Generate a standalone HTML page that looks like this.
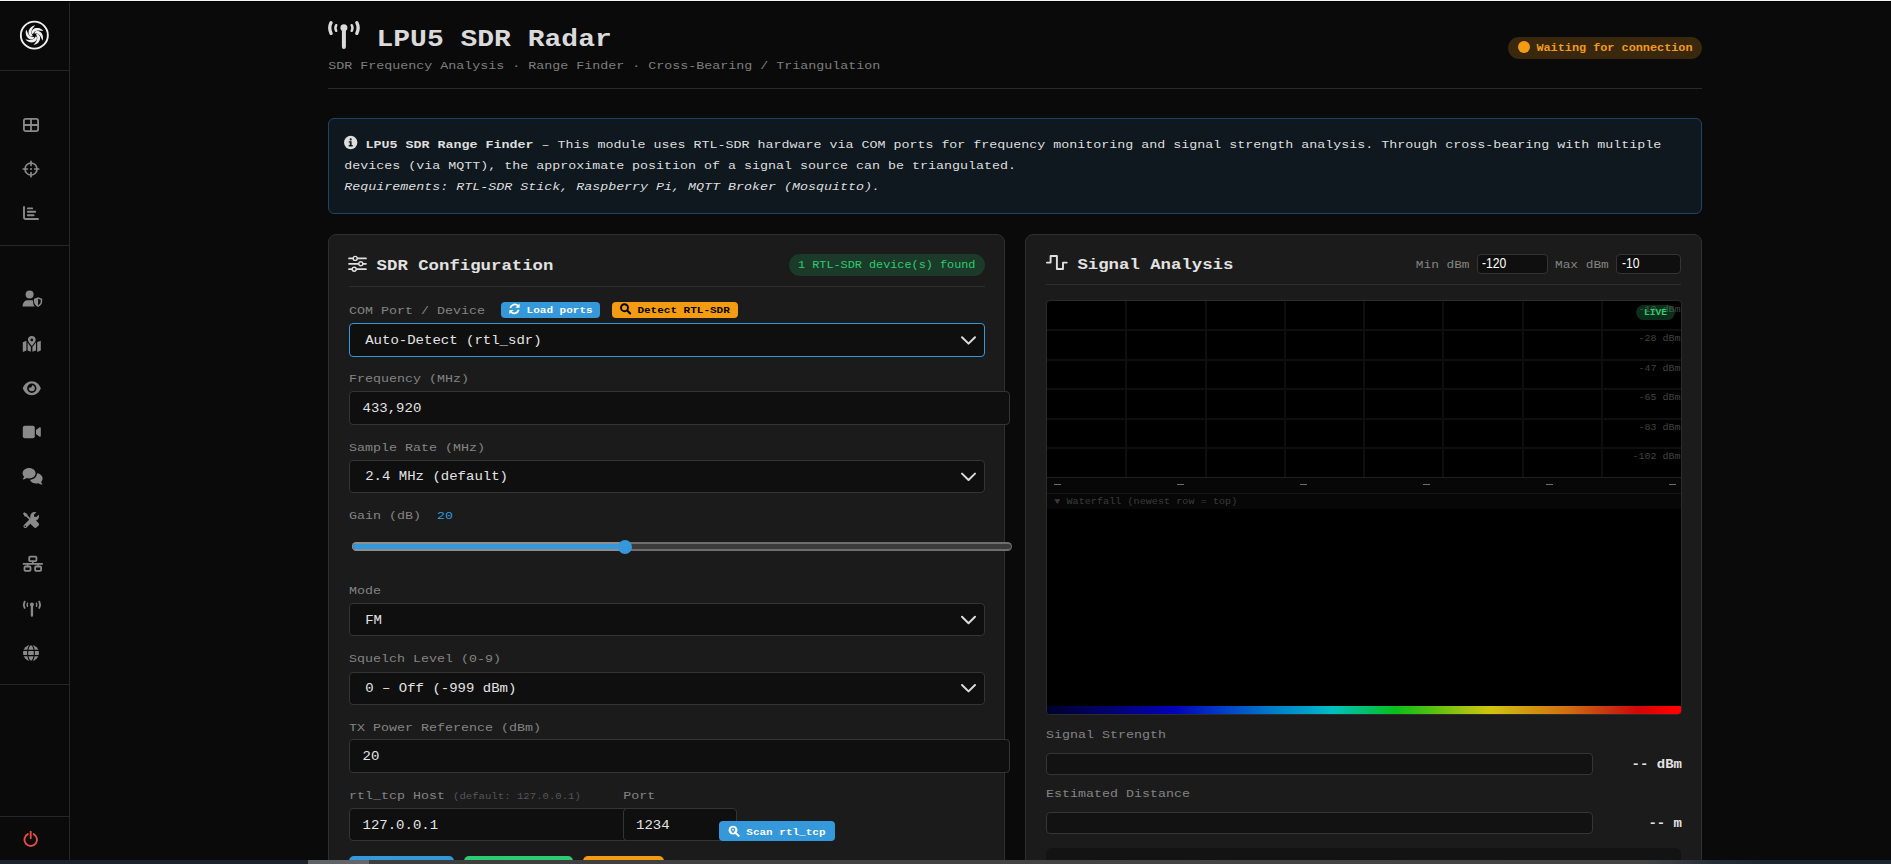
<!DOCTYPE html>
<html lang="en">
<head>
<meta charset="utf-8">
<title>LPU5 SDR Radar</title>
<style>
*{box-sizing:border-box;margin:0;padding:0}
html,body{width:1891px;height:864px;overflow:hidden;background:#0a0a0a}
body{position:relative;font-family:"Liberation Mono","DejaVu Sans Mono",monospace;color:#e0e0e0}
.abs{position:absolute}
.t{position:absolute;white-space:pre;line-height:20px;height:20px}
.ctl{position:absolute;background:#0f0f0f;border:1px solid #343434;border-radius:4px}
.card{position:absolute;background:#1b1b1b;border:1px solid #2f2f2f;border-radius:8px}
.hr{position:absolute;height:1px}
svg{position:absolute;overflow:visible}
</style>
</head>
<body>
<div class="abs" style="left:0px;top:0px;width:1891px;height:1px;background:#f7f8f6;"></div>
<div class="abs" style="left:0px;top:1px;width:1891px;height:1px;background:#000;"></div>
<!-- sidebar -->
<div class="abs" style="left:69px;top:2px;width:1px;height:858px;background:#262626;"></div>
<div class="abs" style="left:0px;top:70px;width:69px;height:1px;background:#262626;"></div>
<div class="abs" style="left:0px;top:245px;width:69px;height:1px;background:#262626;"></div>
<div class="abs" style="left:0px;top:684px;width:69px;height:1px;background:#262626;"></div>
<div class="abs" style="left:0px;top:816px;width:69px;height:1px;background:#262626;"></div>
<svg style="left:18px;top:19px" width="33" height="33" viewBox="-16 -16 33 33" fill="#f0f0f0" ><g transform="translate(0.350 0.150)"><circle cx="0" cy="0" r="13.5" fill="none" stroke="#f0f0f0" stroke-width="1.9"/><g fill="#f0f0f0"><path d="M0.00 -2.00 L0.49 -3.14 L1.21 -3.76 L2.08 -4.11 L3.04 -4.23 L4.05 -4.10 L5.06 -3.74 L6.03 -3.14 L6.90 -2.32 L7.64 -1.30 L8.20 -0.10 L8.55 1.23 L8.67 2.67 L8.52 4.17 L8.11 5.68 L8.11 5.68 L7.25 3.55 L6.64 2.05 L5.94 0.86 L5.18 -0.06 L4.40 -0.75 L3.63 -1.22 L2.92 -1.52 L2.29 -1.69 L1.74 -1.76 L1.28 -1.77 L0.89 -1.76 L0.56 -1.74 L0.27 -1.74 L0.00 -2.00Z"/><path d="M1.73 -1.00 L2.97 -1.14 L3.86 -0.83 L4.60 -0.26 L5.18 0.52 L5.58 1.46 L5.77 2.52 L5.73 3.65 L5.46 4.82 L4.94 5.97 L4.19 7.05 L3.21 8.02 L2.02 8.84 L0.65 9.47 L-0.86 9.86 L-0.86 9.86 L0.55 8.05 L1.55 6.78 L2.23 5.58 L2.65 4.45 L2.85 3.43 L2.87 2.54 L2.78 1.77 L2.61 1.14 L2.40 0.63 L2.18 0.22 L1.97 -0.11 L1.78 -0.38 L1.64 -0.63 L1.73 -1.00Z"/><path d="M1.73 1.00 L2.47 2.00 L2.65 2.93 L2.52 3.85 L2.14 4.74 L1.53 5.56 L0.70 6.25 L-0.30 6.79 L-1.44 7.14 L-2.70 7.26 L-4.01 7.15 L-5.35 6.79 L-6.65 6.17 L-7.87 5.30 L-8.97 4.18 L-8.97 4.18 L-6.70 4.50 L-5.09 4.73 L-3.71 4.72 L-2.53 4.52 L-1.55 4.18 L-0.76 3.76 L-0.14 3.29 L0.32 2.83 L0.66 2.39 L0.90 1.99 L1.08 1.65 L1.22 1.35 L1.37 1.11 L1.73 1.00Z"/><path d="M0.00 2.00 L-0.49 3.14 L-1.21 3.76 L-2.08 4.11 L-3.04 4.23 L-4.05 4.10 L-5.06 3.74 L-6.03 3.14 L-6.90 2.32 L-7.64 1.30 L-8.20 0.10 L-8.55 -1.23 L-8.67 -2.67 L-8.52 -4.17 L-8.11 -5.68 L-8.11 -5.68 L-7.25 -3.55 L-6.64 -2.05 L-5.94 -0.86 L-5.18 0.06 L-4.40 0.75 L-3.63 1.22 L-2.92 1.52 L-2.29 1.69 L-1.74 1.76 L-1.28 1.77 L-0.89 1.76 L-0.56 1.74 L-0.27 1.74 L0.00 2.00Z"/><path d="M-1.73 1.00 L-2.97 1.14 L-3.86 0.83 L-4.60 0.26 L-5.18 -0.52 L-5.58 -1.46 L-5.77 -2.52 L-5.73 -3.65 L-5.46 -4.82 L-4.94 -5.97 L-4.19 -7.05 L-3.21 -8.02 L-2.02 -8.84 L-0.65 -9.47 L0.86 -9.86 L0.86 -9.86 L-0.55 -8.05 L-1.55 -6.78 L-2.23 -5.58 L-2.65 -4.45 L-2.85 -3.43 L-2.87 -2.54 L-2.78 -1.77 L-2.61 -1.14 L-2.40 -0.63 L-2.18 -0.22 L-1.97 0.11 L-1.78 0.38 L-1.64 0.63 L-1.73 1.00Z"/><path d="M-1.73 -1.00 L-2.47 -2.00 L-2.65 -2.93 L-2.52 -3.85 L-2.14 -4.74 L-1.53 -5.56 L-0.70 -6.25 L0.30 -6.79 L1.44 -7.14 L2.70 -7.26 L4.01 -7.15 L5.35 -6.79 L6.65 -6.17 L7.87 -5.30 L8.97 -4.18 L8.97 -4.18 L6.70 -4.50 L5.09 -4.73 L3.71 -4.72 L2.53 -4.52 L1.55 -4.18 L0.76 -3.76 L0.14 -3.29 L-0.32 -2.83 L-0.66 -2.39 L-0.90 -1.99 L-1.08 -1.65 L-1.22 -1.35 L-1.37 -1.11 L-1.73 -1.00Z"/></g></g></svg>
<svg style="left:23px;top:118px" width="17" height="15" viewBox="0 0 17 15" fill="#8a8a8a" ><g transform="translate(0.000 0.000)"><rect x="0.9" y="0.9" width="14.2" height="12.2" rx="1.8" fill="none" stroke="#8a8a8a" stroke-width="1.8"/><path d="M8 1V13M1 7H15" stroke="#8a8a8a" stroke-width="1.8" fill="none"/></g></svg>
<svg style="left:23px;top:161px" width="17" height="17" viewBox="0 0 17 17" fill="#8a8a8a" ><g transform="translate(0.000 0.000)"><circle cx="8" cy="8" r="6.0" fill="none" stroke="#8a8a8a" stroke-width="1.7"/><path d="M8 0.3V4.4M8 11.6V15.7M0.3 8H4.4M11.6 8H15.7" stroke="#8a8a8a" stroke-width="1.7" fill="none" stroke-linecap="round"/><circle cx="8" cy="8" r="1.1" fill="#8a8a8a"/></g></svg>
<svg style="left:23px;top:206px" width="17" height="15" viewBox="0 0 17 15" fill="#8a8a8a" ><g transform="translate(0.000 0.000)"><path d="M1 1V11.2Q1 13 2.8 13H15" stroke="#8a8a8a" stroke-width="1.9" fill="none" stroke-linecap="round"/><path d="M4.8 2.4H9.2M4.8 5.8H12.2M4.8 9.2H10.6" stroke="#8a8a8a" stroke-width="1.9" fill="none" stroke-linecap="round"/></g></svg>
<svg style="left:22px;top:290px" width="21" height="18" viewBox="0 0 21 18" fill="#8a8a8a" ><g transform="translate(0.600 0.600)"><circle cx="7" cy="4" r="4" fill="#8a8a8a"/><path d="M0 16 C0 11.5 2.5 9.6 5.4 9.6 H8.6 C9.4 9.6 10 9.7 10.6 9.9 V12 C10.6 13.8 11.3 15.1 12.2 16 Z" fill="#8a8a8a"/><path d="M15.5 6.6 L19.6 8.2 V11 C19.6 13.6 17.8 15.5 15.5 16.4 C13.2 15.5 11.4 13.6 11.4 11 V8.2 Z M15.5 8.2 V14.8 C17 14 18.1 12.7 18.1 11 V9.2 Z" fill="#8a8a8a" fill-rule="evenodd"/></g></svg>
<svg style="left:22px;top:336px" width="19" height="17" viewBox="0 0 19 17" fill="#8a8a8a" ><g transform="translate(0.800 0.000)"><path d="M0 6.2 L3.6 4.8 V14.6 L0 16 Z M14.6 6.1 L18 4.8 V14.4 L14.4 15.9 V6.4 Z M4.8 6.2 C5.4 7.6 6.8 9.4 8 10.8 V15.8 L4.8 14.6 Z M9.6 15.8 V10.8 C10.8 9.4 12.4 7.6 13.2 6.2 V14.5 Z" fill="#8a8a8a"/><path d="M9 0 C11.2 0 12.9 1.7 12.9 3.8 C12.9 5.6 10.6 8.3 9.5 9.6 C9.2 9.9 8.8 9.9 8.5 9.6 C7.4 8.3 5.1 5.6 5.1 3.8 C5.1 1.7 6.8 0 9 0 Z M9 2.5 A1.4 1.4 0 1 0 9 5.3 A1.4 1.4 0 1 0 9 2.5 Z" fill="#8a8a8a" fill-rule="evenodd"/></g></svg>
<svg style="left:22px;top:381px" width="19" height="15" viewBox="0 0 19 15" fill="#8a8a8a" ><g transform="translate(0.800 0.200)"><path d="M9 0 C13.4 0 16.6 3 18 7 C16.6 11 13.4 14 9 14 C4.6 14 1.4 11 0 7 C1.4 3 4.6 0 9 0 Z M9 2.3 A4.7 4.7 0 1 0 9 11.7 A4.7 4.7 0 1 0 9 2.3 Z" fill="#8a8a8a" fill-rule="evenodd"/><path d="M9 4 A3 3 0 1 1 6 7 C6 6.7 6 6.5 6.1 6.2 C6.4 6.4 6.8 6.5 7.2 6.5 A2 2 0 0 0 9.2 4.5 C9.2 4.3 9.1 4.2 9 4 Z" fill="#8a8a8a"/></g></svg>
<svg style="left:22px;top:425px" width="19" height="13.6" viewBox="0 0 19 13.6" fill="#8a8a8a" ><g transform="translate(0.800 0.700)"><rect x="0" y="0" width="12" height="12.6" rx="2" fill="#8a8a8a"/><path d="M13.2 4.2 L16.8 1.6 C17.3 1.3 18 1.6 18 2.3 V10.3 C18 11 17.3 11.3 16.8 11 L13.2 8.4 Z" fill="#8a8a8a"/></g></svg>
<svg style="left:22px;top:468px" width="21" height="17.6" viewBox="0 0 21 17.6" fill="#8a8a8a" ><g transform="translate(0.600 0.000)"><path d="M6.5 0 C10.1 0 13 2.3 13 5.2 C13 8.1 10.1 10.4 6.5 10.4 C5.6 10.4 4.8 10.3 4 10 C3.2 10.6 1.8 11.4 0.4 11.4 C0.1 11.4 0 11.1 0.2 10.9 C0.2 10.9 1.2 9.9 1.5 8.7 C0.6 7.7 0 6.5 0 5.2 C0 2.3 2.9 0 6.5 0 Z" fill="#8a8a8a"/><path d="M14.4 5.3 C17.5 5.7 20 7.7 20 10.4 C20 11.7 19.4 12.9 18.5 13.9 C18.8 15.1 19.8 16.1 19.8 16.1 C20 16.3 19.9 16.6 19.6 16.6 C18.2 16.6 16.8 15.8 16 15.2 C15.2 15.5 14.4 15.6 13.5 15.6 C10.9 15.6 8.6 14.4 7.6 12.6 C7.6 11.9 7.7 11.7 7.7 11.7 C11.5 11.4 14.4 8.8 14.4 5.3 Z" fill="#8a8a8a"/></g></svg>
<svg style="left:23px;top:512px" width="17" height="17" viewBox="0 0 17 17" fill="#8a8a8a" ><g transform="translate(0.000 0.000)"><path d="M1.2 0.2 L4.2 2 L4.6 3.6 L8.2 7.2 L7 8.4 L3.4 4.8 L1.8 4.4 L0 1.4 Z" fill="#8a8a8a"/><path d="M9.2 8.6 L10.6 7.2 C11.2 6.9 11.8 7 12.2 7.4 L15.6 11 C16.2 11.6 16.2 12.6 15.6 13.2 L13.4 15.4 C12.8 16 11.8 16 11.2 15.4 L7.6 11.8 C7.2 11.4 7.1 10.6 7.6 10 Z" fill="#8a8a8a" transform="translate(0,0.2)"/><path d="M11.6 0 C12.2 0 12.8 0.1 13.3 0.3 L10.9 2.7 L11.2 4.8 L13.3 5.1 L15.7 2.7 C15.9 3.2 16 3.8 16 4.4 C16 6.8 14 8.8 11.6 8.8 C11.2 8.8 10.9 8.8 10.5 8.7 L3.6 15.4 C2.9 16.1 1.7 16.1 1 15.4 C0.3 14.7 0.3 13.6 1 12.9 L7.4 6.4 C7.2 5.8 7.2 5.1 7.2 4.4 C7.2 2 9.2 0 11.6 0 Z M2.3 13.4 A0.8 0.8 0 1 0 2.3 15 A0.8 0.8 0 1 0 2.3 13.4 Z" fill="#8a8a8a" fill-rule="evenodd"/></g></svg>
<svg style="left:22px;top:555px" width="21" height="17" viewBox="0 0 21 17" fill="#8a8a8a" ><g transform="translate(0.800 0.800)"><rect x="6.4" y="0.9" width="7.2" height="4.4" rx="0.9" fill="none" stroke="#8a8a8a" stroke-width="1.8"/><rect x="1.7" y="10.7" width="6" height="4.4" rx="0.9" fill="none" stroke="#8a8a8a" stroke-width="1.8"/><rect x="12.3" y="10.7" width="6" height="4.4" rx="0.9" fill="none" stroke="#8a8a8a" stroke-width="1.8"/><path d="M0 8H20M10 6V8M4.7 8V10M15.3 8V10" stroke="#8a8a8a" stroke-width="1.7" fill="none"/></g></svg>
<svg style="left:22px;top:600px" width="19.06" height="17.29" viewBox="0 0 33.3497 30.2495" fill="#8a8a8a" ><g transform="translate(1.575 0.875)"><circle cx="15.8" cy="7.2" r="3.5" fill="#8a8a8a"/><path d="M15.8 8V26.5" stroke="#8a8a8a" stroke-width="4" stroke-linecap="round" fill="none"/><path d="M8.1 4.6 Q6.5 7.4 8.1 10.2 M23.6 4.6 Q25.2 7.4 23.6 10.2" stroke="#8a8a8a" stroke-width="2.5" stroke-linecap="round" fill="none"/><path d="M3.0 2.0 Q0.3 7.4 3.0 12.8 M28.7 2.0 Q31.4 7.4 28.7 12.8" stroke="#8a8a8a" stroke-width="3.3" stroke-linecap="round" fill="none"/></g></svg>
<svg style="left:23px;top:645px" width="17" height="17" viewBox="0 0 17 17" fill="#8a8a8a" ><g transform="translate(0.000 0.000)"><circle cx="8" cy="8" r="8" fill="#8a8a8a"/><path d="M0 5.4H16M0 10.6H16" stroke="#0a0a0a" stroke-width="1.1" fill="none"/><ellipse cx="8" cy="8" rx="3.4" ry="8.2" fill="none" stroke="#0a0a0a" stroke-width="1.1"/></g></svg>
<svg style="left:23px;top:830px" width="16" height="16" viewBox="0 0 16 16" fill="#8a8a8a" ><g transform="translate(0.200 0.900)"><path d="M4.6 3.2 A6.3 6.3 0 1 0 10.4 3.2" stroke="#e74c3c" stroke-width="1.9" fill="none" stroke-linecap="round"/><path d="M7.5 0.9V7.4" stroke="#e74c3c" stroke-width="1.9" stroke-linecap="round" fill="none"/></g></svg>
<!-- header -->
<svg style="left:328px;top:20px" width="32.6" height="29.5" viewBox="0 0 32.6 29.5" fill="#8a8a8a" ><g transform="translate(0.100 0.600)"><circle cx="15.8" cy="7.2" r="3.5" fill="#dadada"/><path d="M15.8 8V26.5" stroke="#dadada" stroke-width="4" stroke-linecap="round" fill="none"/><path d="M8.1 4.6 Q6.5 7.4 8.1 10.2 M23.6 4.6 Q25.2 7.4 23.6 10.2" stroke="#dadada" stroke-width="2.5" stroke-linecap="round" fill="none"/><path d="M3.0 2.0 Q0.3 7.4 3.0 12.8 M28.7 2.0 Q31.4 7.4 28.7 12.8" stroke="#dadada" stroke-width="3.3" stroke-linecap="round" fill="none"/></g></svg>
<div class="t" style="top:28.55px;font-size:28.000px;color:#dadada;font-weight:bold;left:376.50px;transform:scaleY(0.87);transform-origin:0 17.45px;">LPU5 SDR Radar</div>
<div class="t" style="top:55.95px;font-size:13.333px;color:#7e7e7e;left:328.30px;transform:scaleY(0.87);transform-origin:0 13.55px;">SDR Frequency Analysis · Range Finder · Cross-Bearing / Triangulation</div>
<div class="abs" style="left:1508px;top:37px;width:194px;height:22px;background:#3a280e;border-radius:11px"></div>
<div class="abs" style="left:1518px;top:41px;width:12px;height:12px;background:#f39c12;border-radius:50%"></div>
<div class="t" style="top:37.65px;font-size:11.840px;color:#f39c12;font-weight:bold;left:1536.40px;transform:scaleY(0.87);transform-origin:0 13.15px;">Waiting for connection</div>
<div class="abs" style="left:328px;top:88px;width:1374px;height:1px;background:#2a2a2a;"></div>
<!-- info -->
<div class="abs" style="left:328px;top:118px;width:1374px;height:96px;background:#0e181e;border:1px solid #1d4563;border-radius:6px"></div>
<svg style="left:342px;top:134px" width="17" height="17" viewBox="-8 -8 17 17" fill="#8a8a8a" ><g transform="translate(0.700 0.500)"><circle cx="0" cy="0" r="6.65" fill="#dedede"/><circle cx="0" cy="-3.1" r="1.05" fill="#0e181e"/><path d="M-1.9 -1.2H0.9V2.6H2V3.9H-2V2.6H-0.9V0.1H-1.9Z" fill="#0e181e"/></g></svg>
<div class="t" style="top:134.85px;font-size:13.333px;color:#dedede;left:365.50px;transform:scaleY(0.87);transform-origin:0 13.55px;"><b>LPU5 SDR Range Finder</b> – This module uses RTL-SDR hardware via COM ports for frequency monitoring and signal strength analysis. Through cross-bearing with multiple</div>
<div class="t" style="top:155.55px;font-size:13.333px;color:#dedede;left:344.20px;transform:scaleY(0.87);transform-origin:0 13.55px;">devices (via MQTT), the approximate position of a signal source can be triangulated.</div>
<div class="t" style="top:177.35px;font-size:13.333px;color:#dedede;font-style:italic;left:344.20px;transform:scaleY(0.87);transform-origin:0 13.55px;">Requirements: RTL-SDR Stick, Raspberry Pi, MQTT Broker (Mosquitto).</div>
<!-- cards -->
<div class="card" style="left:328px;top:234px;width:677px;height:700px"></div>
<div class="card" style="left:1025px;top:234px;width:677px;height:700px"></div>
<!-- card 1: SDR Configuration -->
<svg style="left:349px;top:255px" width="18" height="17.4" viewBox="0 0 18 17.4" fill="#8a8a8a" ><g transform="translate(0.000 0.600)"><path d="M0 2.8H17M0 8.2H17M0 13.6H17" stroke="#e0e0e0" stroke-width="1.7" fill="none" stroke-linecap="round"/><circle cx="6.2" cy="2.8" r="2" fill="#1b1b1b" stroke="#e0e0e0" stroke-width="1.4"/><circle cx="11.8" cy="8.2" r="2" fill="#1b1b1b" stroke="#e0e0e0" stroke-width="1.4"/><circle cx="5.2" cy="13.6" r="2" fill="#1b1b1b" stroke="#e0e0e0" stroke-width="1.4"/></g></svg>
<div class="t" style="top:255.89px;font-size:17.333px;color:#e2e2e2;font-weight:bold;left:376.60px;transform:scaleY(0.87);transform-origin:0 14.61px;">SDR Configuration</div>
<div class="abs" style="left:789px;top:254px;width:196px;height:22px;background:#1c3a29;border-radius:11px"></div>
<div class="t" style="top:254.85px;font-size:11.840px;color:#2ecc71;left:798.00px;transform:scaleY(0.87);transform-origin:0 13.15px;">1 RTL-SDR device(s) found</div>
<div class="abs" style="left:349px;top:286px;width:636px;height:1px;background:#2e2e2e;"></div>
<div class="t" style="top:301.35px;font-size:13.333px;color:#848484;left:349.00px;transform:scaleY(0.87);transform-origin:0 13.55px;">COM Port / Device</div>
<div class="abs" style="left:501px;top:302px;width:99px;height:16px;background:#3498db;border-radius:4px"></div>
<svg style="left:509px;top:303px" width="12" height="12" viewBox="0 0 12 12" fill="#8a8a8a" ><g transform="translate(0.000 0.400)"><path d="M1.3 4.6 A4.6 4.6 0 0 1 9.2 2.6" stroke="#fff" stroke-width="1.7" fill="none"/><path d="M9.7 6.4 A4.6 4.6 0 0 1 1.8 8.4" stroke="#fff" stroke-width="1.7" fill="none"/><path d="M10.6 0.2V4.4H6.4Z" fill="#fff"/><path d="M0.4 10.8V6.6H4.6Z" fill="#fff"/></g></svg>
<div class="t" style="top:300.07px;font-size:11.000px;color:#fff;font-weight:bold;left:526.60px;transform:scaleY(0.87);transform-origin:0 12.93px;">Load ports</div>
<div class="abs" style="left:612px;top:302px;width:126px;height:16px;background:#f39c12;border-radius:4px"></div>
<svg style="left:620px;top:303px" width="12" height="12" viewBox="0 0 12 12" fill="#8a8a8a" ><g transform="translate(0.000 0.200)"><circle cx="4.5" cy="4.5" r="3.5" stroke="#000" stroke-width="1.9" fill="none"/><path d="M7.2 7.2L10.2 10.2" stroke="#000" stroke-width="2.1" stroke-linecap="round" fill="none"/></g></svg>
<div class="t" style="top:300.07px;font-size:11.000px;color:#000;font-weight:bold;left:637.40px;transform:scaleY(0.87);transform-origin:0 12.93px;">Detect RTL-SDR</div>
<div class="ctl" style="left:349px;top:323px;width:636px;height:34px;border-color:#3498db"></div>
<div class="t" style="top:330.37px;font-size:14.000px;color:#e4e4e4;left:365.20px;transform:scaleY(0.87);transform-origin:0 13.73px;">Auto-Detect (rtl_sdr)</div>
<svg style="left:960px;top:336px" width="17" height="10" viewBox="0 0 17 10" fill="#8a8a8a" ><g transform="translate(0.500 0.000)"><path d="M1.5 1.2L8 7.6L14.5 1.2" stroke="#dcdcdc" stroke-width="2" fill="none" stroke-linecap="round" stroke-linejoin="round"/></g></svg>
<div class="t" style="top:369.05px;font-size:13.333px;color:#848484;left:349.00px;transform:scaleY(0.87);transform-origin:0 13.55px;">Frequency (MHz)</div>
<div class="ctl" style="left:349px;top:391px;width:661px;height:34px;"></div>
<div class="t" style="top:397.97px;font-size:14.000px;color:#e4e4e4;left:362.50px;transform:scaleY(0.87);transform-origin:0 13.73px;">433,920</div>
<div class="t" style="top:438.05px;font-size:13.333px;color:#848484;left:349.00px;transform:scaleY(0.87);transform-origin:0 13.55px;">Sample Rate (MHz)</div>
<div class="ctl" style="left:349px;top:460px;width:636px;height:33px;"></div>
<div class="t" style="top:466.27px;font-size:14.000px;color:#e4e4e4;left:365.20px;transform:scaleY(0.87);transform-origin:0 13.73px;">2.4 MHz (default)</div>
<svg style="left:960px;top:472px" width="17" height="10" viewBox="0 0 17 10" fill="#8a8a8a" ><g transform="translate(0.500 0.400)"><path d="M1.5 1.2L8 7.6L14.5 1.2" stroke="#dcdcdc" stroke-width="2" fill="none" stroke-linecap="round" stroke-linejoin="round"/></g></svg>
<div class="t" style="top:505.95px;font-size:13.333px;color:#848484;left:349.00px;transform:scaleY(0.87);transform-origin:0 13.55px;">Gain (dB)</div>
<div class="t" style="top:505.95px;font-size:13.333px;color:#3498db;left:437.00px;transform:scaleY(0.87);transform-origin:0 13.55px;">20</div>
<div class="abs" style="left:352px;top:542px;width:660px;height:9px;background:#6e6e6e;border-radius:4.5px"></div>
<div class="abs" style="left:352px;top:542px;width:274px;height:9px;background:#8e8e8e;border-radius:4.5px 0 0 4.5px"></div>
<div class="abs" style="left:353.4px;top:543.6px;width:657.2px;height:5.8px;background:#3b3b3b;border-radius:2.9px"></div>
<div class="abs" style="left:353.4px;top:543.6px;width:271px;height:5.8px;background:#3498db;border-radius:2.9px 0 0 2.9px"></div>
<div class="abs" style="left:617.6px;top:539.6px;width:14px;height:14px;background:#3498db;border-radius:50%"></div>
<div class="t" style="top:580.95px;font-size:13.333px;color:#848484;left:349.00px;transform:scaleY(0.87);transform-origin:0 13.55px;">Mode</div>
<div class="ctl" style="left:349px;top:603px;width:636px;height:33px;"></div>
<div class="t" style="top:609.87px;font-size:14.000px;color:#e4e4e4;left:365.20px;transform:scaleY(0.87);transform-origin:0 13.73px;">FM</div>
<svg style="left:960px;top:615px" width="17" height="10" viewBox="0 0 17 10" fill="#8a8a8a" ><g transform="translate(0.500 0.600)"><path d="M1.5 1.2L8 7.6L14.5 1.2" stroke="#dcdcdc" stroke-width="2" fill="none" stroke-linecap="round" stroke-linejoin="round"/></g></svg>
<div class="t" style="top:649.35px;font-size:13.333px;color:#848484;left:349.00px;transform:scaleY(0.87);transform-origin:0 13.55px;">Squelch Level (0-9)</div>
<div class="ctl" style="left:349px;top:671.5px;width:636px;height:33px;"></div>
<div class="t" style="top:677.77px;font-size:14.000px;color:#e4e4e4;left:365.20px;transform:scaleY(0.87);transform-origin:0 13.73px;">0 – Off (-999 dBm)</div>
<svg style="left:960px;top:683px" width="17" height="10" viewBox="0 0 17 10" fill="#8a8a8a" ><g transform="translate(0.500 0.800)"><path d="M1.5 1.2L8 7.6L14.5 1.2" stroke="#dcdcdc" stroke-width="2" fill="none" stroke-linecap="round" stroke-linejoin="round"/></g></svg>
<div class="t" style="top:717.95px;font-size:13.333px;color:#848484;left:349.00px;transform:scaleY(0.87);transform-origin:0 13.55px;">TX Power Reference (dBm)</div>
<div class="ctl" style="left:349px;top:739.3px;width:661px;height:33.4px;"></div>
<div class="t" style="top:746.07px;font-size:14.000px;color:#e4e4e4;left:362.50px;transform:scaleY(0.87);transform-origin:0 13.73px;">20</div>
<div class="t" style="top:785.85px;font-size:13.333px;color:#848484;left:349.00px;transform:scaleY(0.87);transform-origin:0 13.55px;">rtl_tcp Host</div>
<div class="t" style="top:786.46px;font-size:10.667px;color:#555;left:453.00px;transform:scaleY(0.87);transform-origin:0 12.84px;">(default: 127.0.0.1)</div>
<div class="t" style="top:785.85px;font-size:13.333px;color:#848484;left:623.20px;transform:scaleY(0.87);transform-origin:0 13.55px;">Port</div>
<div class="ctl" style="left:349px;top:808px;width:290px;height:33px;"></div>
<div class="t" style="top:815.27px;font-size:14.000px;color:#e4e4e4;left:362.50px;transform:scaleY(0.87);transform-origin:0 13.73px;">127.0.0.1</div>
<div class="ctl" style="left:623px;top:808px;width:114px;height:33px;"></div>
<div class="t" style="top:815.27px;font-size:14.000px;color:#e4e4e4;left:636.00px;transform:scaleY(0.87);transform-origin:0 13.73px;">1234</div>
<div class="abs" style="left:719px;top:821px;width:116px;height:20px;background:#3498db;border-radius:4px"></div>
<svg style="left:728px;top:825px" width="12" height="12" viewBox="0 0 12 12" fill="#8a8a8a" ><g transform="translate(0.400 0.600)"><circle cx="4.6" cy="4.6" r="4.4" fill="#fff"/><path d="M7.6 7.6L10.3 10.3" stroke="#fff" stroke-width="2" stroke-linecap="round" fill="none"/><path d="M4.6 2 C6 2 6.9 3 6.9 4.1 C6.9 5.2 5.4 6.8 4.6 7.6 C3.8 6.8 2.3 5.2 2.3 4.1 C2.3 3 3.2 2 4.6 2 Z" fill="#3498db"/><circle cx="4.6" cy="4.1" r="0.9" fill="#fff"/></g></svg>
<div class="t" style="top:821.67px;font-size:11.000px;color:#fff;font-weight:bold;left:746.30px;transform:scaleY(0.87);transform-origin:0 12.93px;">Scan rtl_tcp</div>
<div class="abs" style="left:349px;top:856px;width:105px;height:20px;background:#3498db;border-radius:5px"></div>
<div class="abs" style="left:464px;top:856px;width:109px;height:20px;background:#2ecc71;border-radius:5px"></div>
<div class="abs" style="left:583px;top:856px;width:81px;height:20px;background:#f39c12;border-radius:5px"></div>
<!-- card 2: Signal Analysis -->
<svg style="left:1046px;top:255px" width="22.6" height="16" viewBox="0 0 22.6 16" fill="#8a8a8a" ><g transform="translate(0.000 0.000)"><path d="M0.9 7.6H4.6V1H10.9V14H17V7.6H20.8" stroke="#e0e0e0" stroke-width="1.9" fill="none" stroke-linejoin="round" stroke-linecap="round"/></g></svg>
<div class="t" style="top:254.99px;font-size:17.333px;color:#e2e2e2;font-weight:bold;left:1077.40px;transform:scaleY(0.87);transform-origin:0 14.61px;">Signal Analysis</div>
<div class="t" style="top:254.59px;font-size:12.800px;color:#848484;left:1415.80px;transform:scaleY(0.87);transform-origin:0 13.41px;">Min dBm</div>
<div class="ctl" style="left:1477px;top:254px;width:71px;height:20px;"></div>
<div class="t" style="left:1482.4px;top:253.14px;font-size:14.3px;color:#fff;font-family:'Liberation Sans',Arial,sans-serif;transform:scaleX(0.85);transform-origin:0 0">-120</div>
<div class="t" style="top:254.59px;font-size:12.800px;color:#848484;left:1555.00px;transform:scaleY(0.87);transform-origin:0 13.41px;">Max dBm</div>
<div class="ctl" style="left:1616px;top:254px;width:65px;height:20px;"></div>
<div class="t" style="left:1621.5px;top:253.14px;font-size:14.3px;color:#fff;font-family:'Liberation Sans',Arial,sans-serif;transform:scaleX(0.85);transform-origin:0 0">-10</div>
<div class="abs" style="left:1046px;top:284px;width:635px;height:1px;background:#2e2e2e;"></div>
<div class="abs" style="left:1046px;top:300px;width:636px;height:415px;border:1px solid #2c2c2c;border-radius:4px;background:#000;overflow:hidden">
<div class="abs" style="left:78.25px;top:0;width:2px;height:176px;background:#0e0e0e"></div>
<div class="abs" style="left:157.50px;top:0;width:2px;height:176px;background:#0e0e0e"></div>
<div class="abs" style="left:236.75px;top:0;width:2px;height:176px;background:#0e0e0e"></div>
<div class="abs" style="left:316.00px;top:0;width:2px;height:176px;background:#0e0e0e"></div>
<div class="abs" style="left:395.25px;top:0;width:2px;height:176px;background:#0e0e0e"></div>
<div class="abs" style="left:474.50px;top:0;width:2px;height:176px;background:#0e0e0e"></div>
<div class="abs" style="left:553.75px;top:0;width:2px;height:176px;background:#0e0e0e"></div>
<div class="abs" style="left:0;top:28.10px;width:634px;height:2px;background:#0e0e0e"></div>
<div class="abs" style="left:0;top:57.60px;width:634px;height:2px;background:#0e0e0e"></div>
<div class="abs" style="left:0;top:87.10px;width:634px;height:2px;background:#0e0e0e"></div>
<div class="abs" style="left:0;top:116.60px;width:634px;height:2px;background:#0e0e0e"></div>
<div class="abs" style="left:0;top:146.10px;width:634px;height:2px;background:#0e0e0e"></div>
<div class="abs" style="left:0;top:176px;width:634px;height:1px;background:#1f1f1f"></div>
<div class="abs" style="left:0;top:177px;width:634px;height:31px;background:#070707"></div>
<div class="abs" style="left:0;top:192px;width:634px;height:1px;background:#161616"></div>
<div class="abs" style="left:7.2px;top:183px;width:7px;height:1px;background:#6c6c6c"></div>
<div class="abs" style="left:130.2px;top:183px;width:7px;height:1px;background:#6c6c6c"></div>
<div class="abs" style="left:253.2px;top:183px;width:7px;height:1px;background:#6c6c6c"></div>
<div class="abs" style="left:376.2px;top:183px;width:7px;height:1px;background:#6c6c6c"></div>
<div class="abs" style="left:499.2px;top:183px;width:7px;height:1px;background:#6c6c6c"></div>
<div class="abs" style="left:622.2px;top:183px;width:7px;height:1px;background:#6c6c6c"></div>
<div class="abs" style="left:0;top:405px;width:634px;height:8px;background:linear-gradient(90deg,#00002c 0%,#000068 9%,#0000b8 20%,#0040c8 28%,#0078c8 35%,#00a0c8 41%,#00c0c0 45%,#00c070 50%,#08c018 55%,#58c010 61%,#a0c410 66%,#d0c410 70%,#d09810 76%,#d07010 82%,#c83810 88%,#d00808 93%,#f80000 98%,#ff0000 100%)"></div>
</div>
<div class="t" style="top:299.94px;font-size:10.000px;color:#424242;right:210.40px;transform:scaleY(0.87);transform-origin:0 12.66px;">-10 dBm</div>
<div class="t" style="top:329.44px;font-size:10.000px;color:#424242;right:210.40px;transform:scaleY(0.87);transform-origin:0 12.66px;">-28 dBm</div>
<div class="t" style="top:358.94px;font-size:10.000px;color:#424242;right:210.40px;transform:scaleY(0.87);transform-origin:0 12.66px;">-47 dBm</div>
<div class="t" style="top:388.44px;font-size:10.000px;color:#424242;right:210.40px;transform:scaleY(0.87);transform-origin:0 12.66px;">-65 dBm</div>
<div class="t" style="top:417.94px;font-size:10.000px;color:#424242;right:210.40px;transform:scaleY(0.87);transform-origin:0 12.66px;">-83 dBm</div>
<div class="t" style="top:447.44px;font-size:10.000px;color:#424242;right:210.40px;transform:scaleY(0.87);transform-origin:0 12.66px;">-102 dBm</div>
<div class="abs" style="left:1636px;top:305px;width:38.5px;height:15px;background:rgba(46,204,113,0.23);border-radius:8px"></div>
<div class="t" style="top:303.35px;font-size:9.600px;color:#2ecc71;font-weight:bold;left:1644.00px;transform:scaleY(0.87);transform-origin:0 12.55px;">LIVE</div>
<div class="t" style="top:492.04px;font-size:10.000px;color:#3c3c3c;letter-spacing:0.100px;left:1054.25px;transform:scaleY(0.87);transform-origin:0 12.66px;">▼ Waterfall (newest row = top)</div>
<div class="t" style="top:724.85px;font-size:13.333px;color:#848484;left:1046.00px;transform:scaleY(0.87);transform-origin:0 13.55px;">Signal Strength</div>
<div class="abs" style="left:1046px;top:753px;width:547px;height:22px;background:#121212;border:1px solid #353535;border-radius:4px"></div>
<div class="t" style="top:754.27px;font-size:14.000px;color:#e2e2e2;font-weight:bold;right:209.00px;transform:scaleY(0.87);transform-origin:0 13.73px;">-- dBm</div>
<div class="t" style="top:783.75px;font-size:13.333px;color:#848484;left:1046.00px;transform:scaleY(0.87);transform-origin:0 13.55px;">Estimated Distance</div>
<div class="abs" style="left:1046px;top:812px;width:547px;height:22px;background:#121212;border:1px solid #353535;border-radius:4px"></div>
<div class="t" style="top:812.97px;font-size:14.000px;color:#e2e2e2;font-weight:bold;right:209.00px;transform:scaleY(0.87);transform-origin:0 13.73px;">-- m</div>
<div class="abs" style="left:1046px;top:848px;width:635px;height:30px;background:#131313;border-radius:6px"></div>
<div class="abs" style="left:0px;top:860px;width:1891px;height:4px;background:linear-gradient(90deg,#1b222b 0,#1b222b 308px,#5e6165 308px,#66686b 369px,#3e3e3e 369px,#454545 1200px,#434343 1640px,#383c40 1672px,#252e38 1712px,#1b2530 1765px,#1b2530 1891px);"></div>
</body>
</html>
